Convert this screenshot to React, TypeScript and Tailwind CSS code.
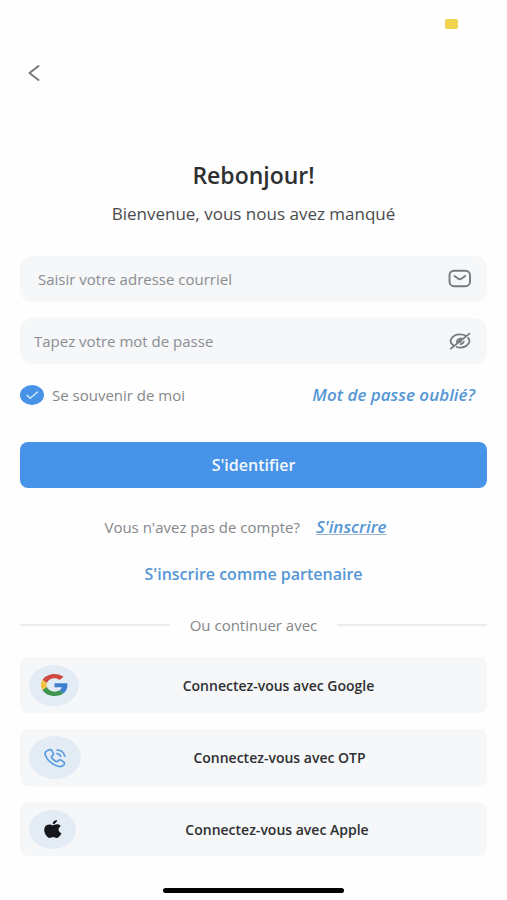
import { ReactNode } from "react";

interface SocialLogin {
  label: string;
  badge: string;
  row: string;
  icon: ReactNode;
}

function GoogleIcon() {
  return (
    <svg viewBox="0 0 48 48" preserveAspectRatio="none" className="w-[27px] h-[22px]" aria-hidden="true">
      <path fill="#cf4a43" d="M24 9.5c3.54 0 6.71 1.22 9.21 3.6l6.85-6.85C35.9 2.38 30.47 0 24 0 14.62 0 6.51 5.38 2.56 13.22l7.98 6.19C12.43 13.72 17.74 9.5 24 9.5z" />
      <path fill="#3f7fd0" d="M46.98 24.55c0-1.57-.15-3.09-.38-4.55H24v9.02h12.94c-.58 2.96-2.26 5.48-4.78 7.18l7.73 6c4.51-4.18 7.09-10.36 7.09-17.65z" />
      <path fill="#f3c244" d="M10.53 28.59c-.48-1.45-.76-2.99-.76-4.59s.27-3.14.76-4.59l-7.98-6.19C.92 16.46 0 20.12 0 24s.92 7.54 2.56 10.78l7.97-6.19z" />
      <path fill="#3f9450" d="M24 48c6.48 0 11.93-2.13 15.89-5.81l-7.73-6c-2.15 1.45-4.92 2.3-8.16 2.3-6.26 0-11.57-4.22-13.47-9.91l-7.98 6.19C6.51 42.62 14.62 48 24 48z" />
    </svg>
  );
}

function PhoneIcon() {
  return (
    <svg
      viewBox="0 0 24 20"
      className="w-[24px] h-[20px]"
      fill="none"
      stroke="#5a9be0"
      strokeWidth="1.7"
      strokeLinecap="round"
      strokeLinejoin="round"
      aria-hidden="true"
    >
      <path d="M6.2 1.9 4 2.8C2.1 3.7 1.6 5.4 2.4 7.4c2 5.1 6.6 8.9 12.6 10.8 2.3.7 4.7.2 5.9-1.4.9-1.2.9-2.1-.2-2.9l-2.6-1.7c-1-.6-1.9-.5-2.7.3l-.8.8c-.5.5-1.1.5-1.7.1-1.9-1.1-3.3-2.4-4.3-3.9-.4-.6-.3-1.100.3-1.500l.8-.6c.8-.6 1-1.3.5-2.2L8.8 2.7c-.6-1-1.5-1.3-2.6-.8z" />
      <path d="M14 5.600c1.900.3 3.200 1.300 3.600 2.900" />
      <path d="M14 2c4.400.3 7.100 2.600 7.700 6.200" />
    </svg>
  );
}

function AppleIcon() {
  return (
    <svg viewBox="2 0 20.5 24" preserveAspectRatio="none" className="w-[18px] h-[18px]" fill="#14181d" aria-hidden="true">
      <path d="M12.152 6.896c-.948 0-2.415-1.078-3.960-1.040-2.040.027-3.910 1.183-4.961 3.014-2.117 3.675-.546 9.103 1.519 12.090 1.013 1.454 2.208 3.090 3.792 3.039 1.520-.065 2.090-.987 3.935-.987 1.831 0 2.350.987 3.960.948 1.637-.026 2.676-1.480 3.676-2.948 1.156-1.688 1.636-3.325 1.662-3.415-.039-.013-3.182-1.221-3.220-4.857-.026-3.040 2.480-4.494 2.597-4.559-1.429-2.090-3.623-2.324-4.390-2.376-2-.156-3.675 1.090-4.610 1.090zM15.530 3.830c.843-1.012 1.400-2.427 1.245-3.830-1.207.052-2.662.805-3.532 1.818-.780.896-1.454 2.338-1.273 3.714 1.338.104 2.715-.688 3.559-1.701" />
    </svg>
  );
}

function MailIcon() {
  return (
    <svg viewBox="0 0 24 20" className="w-6 h-5" fill="none" stroke="#77797c" strokeWidth="1.9" strokeLinecap="round" strokeLinejoin="round" aria-hidden="true">
      <rect x="1.5" y="1.7" width="20.5" height="15.5" rx="4.5" />
      <path d="m6.5 7 3.8 2.7c.9.600 2.100.6 3 0L17.200 7" />
    </svg>
  );
}

function EyeOffIcon() {
  return (
    <svg viewBox="0 0 24 20" className="w-6 h-5" fill="none" stroke="#77797c" strokeWidth="1.8" strokeLinecap="round" strokeLinejoin="round" aria-hidden="true">
      <path d="M17.8 4.8C16.2 3.9 14.2 3.4 12 3.4c-4 0-7.3 1.8-9 4.7-.7 1.2-.7 2.5 0 3.7.6 1 1.3 1.8 2.2 2.5" />
      <path d="M8.6 16c1.1.4 2.2.6 3.4.6 4 0 7.3-1.9 9-4.8.7-1.2.7-2.500 0-3.700-.3-.4-.6-.8-.9-1.200" />
      <path d="M14.500 7.900A3.900 3.300 0 0 0 9.300 12.100" />
      <path d="M15.800 10.600a3.900 3.300 0 0 1-3.100 2.600" />
      <circle cx="12" cy="10" r="1" />
      <path d="M21.500 2.600 2.800 17.600" />
    </svg>
  );
}

const socialLogins: SocialLogin[] = [
  {
    label: "Connectez-vous avec Google",
    badge: "w-[50px] h-[41px]",
    row: "h-14",
    icon: <GoogleIcon />,
  },
  {
    label: "Connectez-vous avec OTP",
    badge: "w-[52px] h-[43px]",
    row: "h-[57px]",
    icon: <PhoneIcon />,
  },
  {
    label: "Connectez-vous avec Apple",
    badge: "w-[47px] h-[39px]",
    row: "h-[54px]",
    icon: <AppleIcon />,
  },
];

export default function App() {
  return (
    <div className="min-h-screen bg-[#fefefe] font-['Open_Sans',sans-serif] text-[#2e2f31]">
      <div className="flex justify-end pt-[19px] pr-[49px]">
        <span className="w-[13px] h-[10px] rounded-[2px] bg-[#f0d54e]" />
      </div>

      <header className="px-5 pt-8">
        <button type="button" aria-label="Retour" className="flex w-7 h-6 items-center justify-center">
          <svg viewBox="0 0 12 18" className="w-3 h-[18px]" fill="none" stroke="#77797c" strokeWidth="2" strokeLinecap="round" strokeLinejoin="round">
            <path d="M10.5 2 1.5 9l9 7" />
          </svg>
        </button>
      </header>

      <main className="px-5">
        <h1 className="mt-[74px] text-center text-[23px] leading-8 font-semibold">
          Rebonjour!
        </h1>
        <p className="mt-[11px] text-center text-[17px] leading-6 text-[#4a4b4e]">
          Bienvenue, vous nous avez manqué
        </p>

        <form className="mt-[30px]" onSubmit={(e) => e.preventDefault()}>
          <div className="flex items-center h-[46px] rounded-xl bg-[#f5f7f9] pl-[18px] pr-[15px]">
            <input
              type="email"
              aria-label="Adresse courriel"
              placeholder="Saisir votre adresse courriel"
              className="flex-1 min-w-0 bg-transparent text-[15px] leading-6 outline-none placeholder:text-[#8b8d91]"
            />
            <MailIcon />
          </div>
          <div className="mt-4 flex items-center h-[46px] rounded-xl bg-[#f5f7f9] pl-[14px] pr-[15px]">
            <input
              type="password"
              aria-label="Mot de passe"
              placeholder="Tapez votre mot de passe"
              className="flex-1 min-w-0 bg-transparent text-[15px] leading-6 outline-none placeholder:text-[#8b8d91]"
            />
            <button type="button" aria-label="Afficher le mot de passe">
              <EyeOffIcon />
            </button>
          </div>

          <div className="mt-[19px] flex items-center justify-between pr-3">
            <label className="flex items-center gap-2 text-[15px] leading-6 text-[#85878a]">
              <span className="relative flex">
                <input
                  type="checkbox"
                  defaultChecked
                  className="peer appearance-none w-6 h-5 rounded-[50%] bg-[#dfe7f1] checked:bg-[#4793e8]"
                />
                <svg viewBox="0 0 24 20" className="pointer-events-none absolute inset-0 w-6 h-5 opacity-0 peer-checked:opacity-100" fill="none" stroke="#d5e8fb" strokeWidth="1.5" strokeLinecap="round" strokeLinejoin="round">
                  <path d="m7 10.2 3.2 3L17.5 7" />
                </svg>
              </span>
              Se souvenir de moi
            </label>
            <a href="#" className="text-[17px] leading-6 font-semibold italic text-[#5596d6]">
              Mot de passe oublié?
            </a>
          </div>

          <button
            type="submit"
            className="mt-[35px] w-full h-[46px] rounded-lg bg-[#4793e8] text-[16px] font-semibold text-[#f4f9ff]"
          >
            S'identifier
          </button>
        </form>

        <p className="mt-[27px] flex items-center justify-center gap-4 pr-4 text-[15px] leading-6 text-[#85878a]">
          Vous n'avez pas de compte?
          <a href="#" className="text-[17px] font-semibold italic text-[#5596d6] underline decoration-[#9fb4cc]">
            S'inscrire
          </a>
        </p>
        <p className="mt-[23px] text-center text-[16px] leading-6">
          <a href="#" className="font-semibold text-[#5596d6]">
            S'inscrire comme partenaire
          </a>
        </p>

        <div className="mt-[27px] flex items-center gap-5 text-[15px] leading-6 text-[#85878a]">
          <span className="flex-1 h-[2px] bg-[#ececee]" />
          Ou continuer avec
          <span className="flex-1 h-[2px] bg-[#ececee]" />
        </div>

        <div className="mt-5 flex flex-col gap-4">
          {socialLogins.map((item) => (
            <button
              key={item.label}
              type="button"
              className={`flex items-center w-full rounded-lg bg-[#f5f7f9] px-[9px] ${item.row}`}
            >
              <span className={`flex items-center justify-center rounded-[50%] bg-[#e3ecf5] ${item.badge}`}>
                {item.icon}
              </span>
              <span className="flex-1 text-center text-[14px] font-semibold">
                {item.label}
              </span>
            </button>
          ))}
        </div>
      </main>

      <div className="mx-auto mt-8 w-[181px] h-[5px] rounded-full bg-black" />
    </div>
  );
}
